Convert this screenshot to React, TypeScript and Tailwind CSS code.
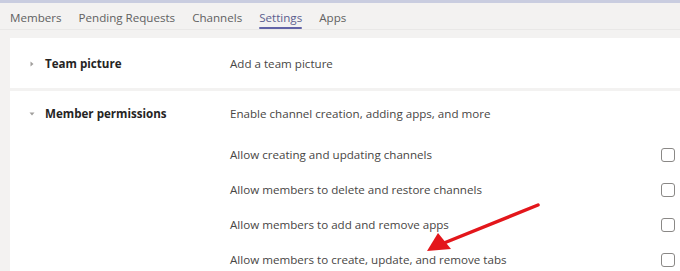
import { useState } from "react";

const tabs = ["Members", "Pending Requests", "Channels", "Settings", "Apps"];

const permissions = [
  "Allow creating and updating channels",
  "Allow members to delete and restore channels",
  "Allow members to add and remove apps",
  "Allow members to create, update, and remove tabs",
];

function Chevron({ open }: { open: boolean }) {
  return (
    <svg width="6" height="6" viewBox="0 0 6 6" className="text-[#a19f9d]">
      {open ? (
        <path d="M0.5 1.5 L5.5 1.5 L3 4.5 Z" fill="currentColor" />
      ) : (
        <path d="M1.5 0.5 L4.5 3 L1.5 5.5 Z" fill="currentColor" />
      )}
    </svg>
  );
}

export default function App() {
  const [checked, setChecked] = useState<boolean[]>([false, false, false, false]);

  return (
    <div
      className="relative w-[680px] h-[271px] overflow-hidden bg-[#f3f2f1] text-[11.6px]"
      style={{ fontFamily: '"Open Sans", "Noto Sans", sans-serif' }}
    >
      {/* top strip */}
      <div className="h-[3px] bg-[#c9cde0]" />

      {/* tabs */}
      <div className="flex h-[27px] items-start gap-[17px] pl-[10px] pt-[6px] border-b border-[#e9e8e7]">
        {tabs.map((t) => (
          <div key={t} className="relative">
            <span className={t === "Settings" ? "text-[#5c5e8f]" : "text-[#616161]"}>{t}</span>
            {t === "Settings" && (
              <div className="absolute left-0 right-0 top-[18px] h-[2px] rounded-full bg-[#6264a7]" />
            )}
          </div>
        ))}
      </div>

      {/* card */}
      <div className="ml-[10px] mt-[8px] bg-white">
        <div className="flex h-[50px] items-center pt-[2px]">
          <div className="flex w-[220px] items-center gap-[10px] pl-[19px]">
            <Chevron open={false} />
            <span className="font-bold text-[#252423]">Team picture</span>
          </div>
          <span className="text-[#484644]">Add a team picture</span>
        </div>

        <div className="h-[3px] bg-[#f3f2f1]" />

        <div className="flex h-[46px] items-center">
          <div className="flex w-[220px] items-center gap-[10px] pl-[19px]">
            <Chevron open />
            <span className="font-bold text-[#252423]">Member permissions</span>
          </div>
          <span className="text-[#484644]">Enable channel creation, adding apps, and more</span>
        </div>

        {permissions.map((p, i) => (
          <div key={p} className="flex h-[35px] items-center pl-[220px] pr-[5px]">
            <span className="flex-1 text-[#484644]">{p}</span>
            <button
              onClick={() => setChecked(checked.map((c, j) => (j === i ? !c : c)))}
              className={`h-[14px] w-[14px] rounded-[3px] border-[1.5px] border-[#8a8886] ${
                checked[i] ? "bg-[#6264a7]" : "bg-white"
              }`}
            />
          </div>
        ))}
      </div>

      {/* annotation arrow */}
      <svg className="absolute left-0 top-0 pointer-events-none" width="680" height="271">
        <line x1="538" y1="205" x2="444" y2="243" stroke="#e3161b" strokeWidth="3.5" strokeLinecap="round" />
        <path d="M427 251 L438 233 L451 249 Z" fill="#e3161b" />
      </svg>
    </div>
  );
}
